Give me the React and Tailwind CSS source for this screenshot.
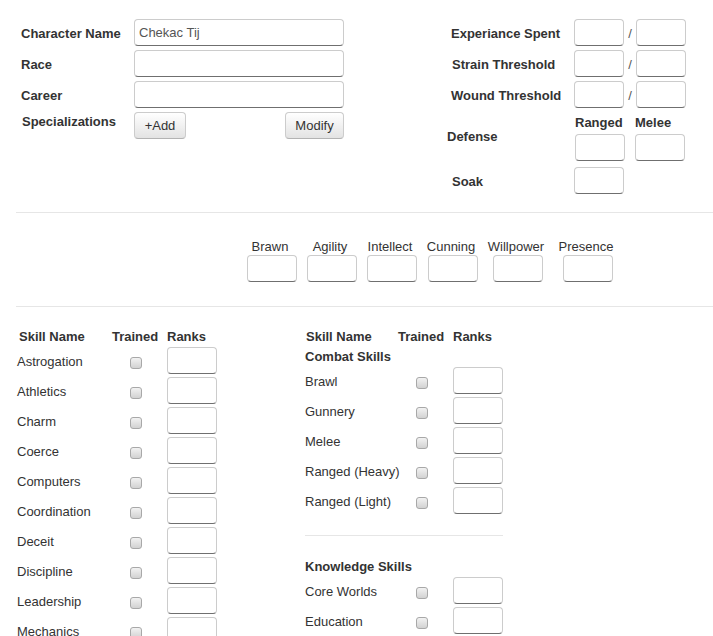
import React from 'react';

const Box = ({ w = 'w-[50px]', value = '' }) => (
  <input
    readOnly
    value={value}
    className={`${w} h-[27px] shrink-0 rounded-[4px] border border-[#cccccc] border-b-[#6f6f6f] bg-white px-[4px] text-[13px] font-normal text-[#555] outline-none`}
  />
);

const Check = () => (
  <span className="ml-[18px] mt-[4px] block h-[12px] w-[12px] rounded-[3px] border border-[#a8a8a8] bg-linear-to-b from-[#f2f2f2] to-[#d2d2d2]" />
);

const Btn = ({ children, w }) => (
  <button
    className={`${w} h-[27px] rounded-[4px] border border-[#cccccc] border-b-[#b3b3b3] bg-linear-to-b from-[#ffffff] to-[#e3e3e3] text-[13px] text-[#333]`}
  >
    {children}
  </button>
);

const Row = ({ name, cols }) => (
  <div className={`grid ${cols} mb-[3px] h-[27px] items-center`}>
    <span className="whitespace-nowrap pt-[2px]">{name}</span>
    <div className="flex items-center">
      <Check />
    </div>
    <Box />
  </div>
);

const leftSkills = [
  'Astrogation',
  'Athletics',
  'Charm',
  'Coerce',
  'Computers',
  'Coordination',
  'Deceit',
  'Discipline',
  'Leadership',
  'Mechanics',
];

const combat = ['Brawl', 'Gunnery', 'Melee', 'Ranged (Heavy)', 'Ranged (Light)'];
const knowledge = ['Core Worlds', 'Education'];

const attrs = [
  ['Brawn', 'ml-[247px]'],
  ['Agility', 'ml-[10px]'],
  ['Intellect', 'ml-[10px]'],
  ['Cunning', 'ml-[11px]'],
  ['Willpower', 'ml-[15px]'],
  ['Presence', 'ml-[20px]'],
];

export default function App() {
  return (
    <div className="min-h-[636px] w-[713px] overflow-hidden bg-white font-['Liberation_Sans',Arial,sans-serif] text-[13px] text-[#333]">
      {/* Top section */}
      <div className="flex items-start pt-[19px]">
        <div className="ml-[21px] grid grid-cols-[113px_210px] auto-rows-[27px] items-center gap-y-[4px] font-bold">
          <span className="pt-[2px]">Character Name</span>
          <Box w="w-[210px]" value="Chekac Tij" />
          <span className="pt-[2px]">Race</span>
          <Box w="w-[210px]" />
          <span className="pt-[2px]">Career</span>
          <Box w="w-[210px]" />
          <span className="self-start pl-[1px]">Specializations</span>
          <div className="flex justify-between font-normal">
            <Btn w="w-[52px]">+Add</Btn>
            <Btn w="w-[59px]">Modify</Btn>
          </div>
        </div>

        <div className="ml-[107px] flex flex-col font-bold">
          {[
            ['Experiance Spent', ''],
            ['Strain Threshold', 'pl-[1px]'],
            ['Wound Threshold', ''],
          ].map(([l, p]) => (
            <div key={l} className="mb-[4px] flex h-[27px] items-center">
              <span className={`w-[123px] pt-[2px] ${p}`}>{l}</span>
              <Box />
              <span className="w-[12px] pt-[2px] text-center font-normal text-[#555]">/</span>
              <Box />
            </div>
          ))}
          <div className="flex items-center">
            <span className="-ml-[4px] w-[128px]">Defense</span>
            <div className="grid grid-cols-[50px_50px] gap-x-[10px]">
              <span className="mt-[3px] leading-[16px]">Ranged</span>
              <span className="mt-[3px] leading-[16px]">Melee</span>
              <div className="mt-[3px]">
                <Box />
              </div>
              <div className="mt-[3px]">
                <Box />
              </div>
            </div>
          </div>
          <div className="mt-[6px] flex h-[27px] items-center">
            <span className="w-[123px] pl-[1px] pt-[2px]">Soak</span>
            <Box />
          </div>
        </div>
      </div>

      <div className="ml-[16px] mt-[18px] border-t border-[#e6e6e6]" />

      {/* Attributes */}
      <div className="mt-[26px] flex">
        {attrs.map(([n, ml]) => (
          <div key={n} className={`${ml} flex w-[50px] flex-col items-center`}>
            <span className="mr-[4px] whitespace-nowrap leading-[16px]">{n}</span>
            <Box />
          </div>
        ))}
      </div>

      <div className="ml-[16px] mt-[24px] border-t border-[#e6e6e6]" />

      {/* Skills */}
      <div className="mt-[19px] flex items-start">
        <div className="ml-[17px] w-[200px]">
          <div className="grid h-[20px] grid-cols-[95px_55px_50px] font-bold leading-[22px]">
            <span className="pl-[2px]">Skill Name</span>
            <span>Trained</span>
            <span>Ranks</span>
          </div>
          <div className="mt-[1px]">
            {leftSkills.map((s) => (
              <Row key={s} name={s} cols="grid-cols-[95px_55px_50px]" />
            ))}
          </div>
        </div>

        <div className="ml-[88px] w-[198px]">
          <div className="grid h-[20px] grid-cols-[93px_55px_50px] font-bold leading-[22px]">
            <span className="pl-[1px]">Skill Name</span>
            <span>Trained</span>
            <span>Ranks</span>
          </div>
          <div className="h-[20px] font-bold leading-[22px]">Combat Skills</div>
          <div className="mt-[1px]">
            {combat.map((s) => (
              <Row key={s} name={s} cols="grid-cols-[93px_55px_50px]" />
            ))}
          </div>
          <div className="mt-[21px] border-t border-[#e6e6e6]" />
          <div className="mt-[20px] h-[20px] font-bold leading-[22px]">Knowledge Skills</div>
          <div className="mt-[1px]">
            {knowledge.map((s) => (
              <Row key={s} name={s} cols="grid-cols-[93px_55px_50px]" />
            ))}
          </div>
        </div>
      </div>
    </div>
  );
}
